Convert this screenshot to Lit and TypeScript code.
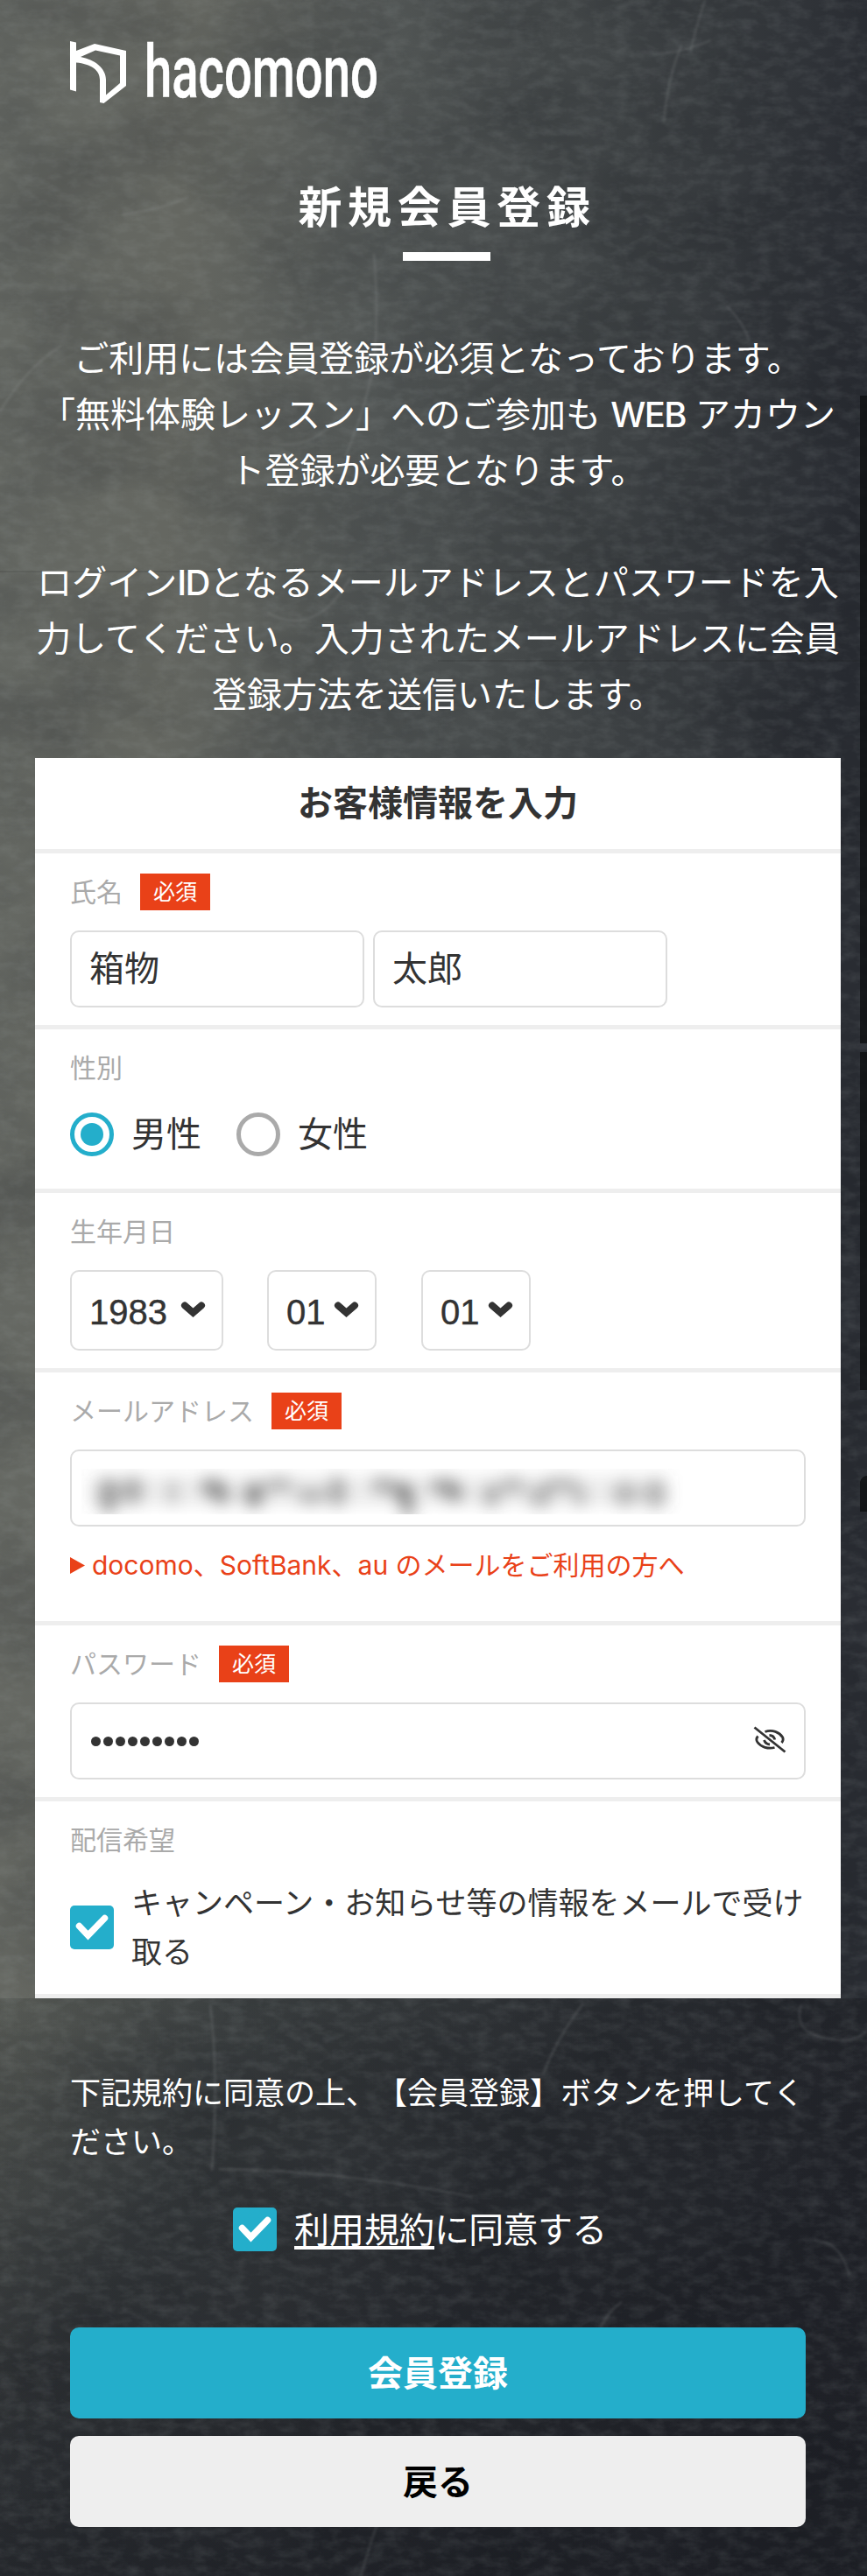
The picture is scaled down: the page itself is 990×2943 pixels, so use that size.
import { LitElement, html, svg, css, nothing } from "lit";
import { customElement, property } from "lit/decorators.js";

const check = svg`<path d="M10.5 23.5 L20.5 34 L39.5 14.5" fill="none" stroke="#fff" stroke-width="7.5" stroke-linecap="round" stroke-linejoin="miter"/>`;

@customElement("concrete-wall")
class ConcreteWall extends LitElement {
  static styles = css`
    :host { display: block; overflow: hidden; }
    svg { display: block; width: 990px; height: 2943px; }
  `;
  render() {
    return html`<svg viewBox="0 0 990 2943" aria-hidden="true">
      <defs>
        <linearGradient id="top" x1="0" y1="0" x2="1" y2="0.12">
          <stop offset="0" stop-color="#656863"/><stop offset="0.22" stop-color="#656761"/>
          <stop offset="0.45" stop-color="#525655"/><stop offset="0.72" stop-color="#3e4244"/>
          <stop offset="1" stop-color="#2a2d33"/>
        </linearGradient>
        <linearGradient id="low" x1="0" y1="0" x2="1" y2="0.3">
          <stop offset="0" stop-color="#575a55"/><stop offset="0.25" stop-color="#3a3e3f"/>
          <stop offset="0.6" stop-color="#2a2d31"/><stop offset="1" stop-color="#212329"/>
        </linearGradient>
        <linearGradient id="fade" x1="0" y1="0" x2="0" y2="1">
          <stop offset="0" stop-color="#1c1e24" stop-opacity="0"/><stop offset="1" stop-color="#1c1e24" stop-opacity="0.65"/>
        </linearGradient>
        <filter id="mottle" x="0" y="0" width="100%" height="100%" color-interpolation-filters="sRGB">
          <feTurbulence type="fractalNoise" baseFrequency="0.006 0.009" numOctaves="6" seed="7"/>
          <feColorMatrix values="0 0 0 0 0.07  0 0 0 0 0.08  0 0 0 0 0.1  2 0 0 0 -0.75"/>
        </filter>
        <filter id="grain" x="0" y="0" width="100%" height="100%" color-interpolation-filters="sRGB">
          <feTurbulence type="fractalNoise" baseFrequency="0.05 0.09" numOctaves="4" seed="23"/>
          <feColorMatrix values="0 0 0 0 0.68  0 0 0 0 0.71  0 0 0 0 0.71  1 0 0 0 -0.38"/>
        </filter>
        <filter id="soft"><feGaussianBlur stdDeviation="1.6"/></filter>
      </defs>
      <rect width="990" height="2283" fill="url(#top)"/>
      <rect y="2283" width="990" height="660" fill="url(#low)"/>
      <rect y="2283" width="990" height="660" fill="url(#fade)"/>
      <rect width="990" height="2943" filter="url(#mottle)" opacity="0.22"/>
      <rect width="990" height="2943" filter="url(#grain)" opacity="0.24"/>
      <g fill="none" stroke="#a9b0ae" stroke-opacity="0.2" stroke-width="2.2" filter="url(#soft)">
        <path d="M805 0 Q795 30 788 60"/><path d="M745 62 Q780 60 812 46"/>
        <path d="M778 52 Q762 90 758 140"/><path d="M140 245 Q190 238 215 225"/>
        <path d="M427 290 Q432 350 428 400 T395 520"/><path d="M310 506 Q350 515 382 482"/>
        <path d="M305 700 Q360 730 400 660"/><path d="M0 470 Q30 420 70 395"/>
        <path d="M830 350 Q850 370 856 390"/><path d="M240 2290 Q250 2370 242 2480"/>
        <path d="M665 2290 Q635 2330 620 2370"/><path d="M250 2478 Q390 2480 540 2510"/>
        <path d="M915 2290 Q905 2320 940 2328 T990 2320"/><path d="M710 2630 Q695 2640 685 2660"/>
        <path d="M430 2885 Q420 2915 412 2943"/><path d="M970 2600 Q960 2560 930 2560"/>
      </g>
      <g fill="#15161b" fill-opacity="0.12">
        <rect y="652" width="990" height="2"/><rect y="754" x="500" width="490" height="2"/>
      </g>
      <g fill="#0d0e10" fill-opacity="0.78">
        <rect x="982" y="452" width="8" height="740"/>
        <path d="M982 1202 H990 V1588 H982 Z"/>
        <path d="M990 1686 Q984 1686 982 1693 V1727 H990 Z"/>
      </g>
    </svg>`;
  }
}

@customElement("form-row")
class FormRow extends LitElement {
  @property() label = "";
  @property({ type: Boolean }) required = false;
  static styles = css`
    :host { display: block; box-sizing: border-box; padding: 22px 40px 20px; border-bottom: 5px solid #eee; }
    .head { display: flex; align-items: center; gap: 20px; height: 44px; }
    .label { font-size: 30px; line-height: 43px; color: #aaa; }
    .badge { width: 80px; height: 42px; background: #e94118; color: #fff; font-size: 25px; line-height: 42px; text-align: center; }
    .body { padding-top: 22px; }
  `;
  render() {
    return html`<div class="head"><span class="label">${this.label}</span>${this.required ? html`<span class="badge">必須</span>` : nothing}</div>
      <div class="body"><slot></slot></div>`;
  }
}

@customElement("app-root")
class AppRoot extends LitElement {
  static styles = css`
    :host { display: block; width: 990px; font-family: Inter, "Noto Sans CJK JP", sans-serif; color: #333; font-size: 40px; text-spacing-trim: space-all; }
    * { box-sizing: border-box; }
    .page { display: grid; width: 990px; height: 2943px; overflow: hidden; }
    .wall, .content { grid-area: 1 / 1; }
    .content { z-index: 1; padding: 0 30px 0 40px; width: 990px; }
    .logo { display: block; margin: 10px 0 0 35px; width: 370px; height: 150px; overflow: visible; }
    .wordmark { font-family: Roboto, sans-serif; font-weight: 500; font-size: 84px; fill: #fff; stroke: #fff; stroke-width: 0.6px; }
    h1 { margin: 40px 0 0; padding-left: 21px; height: 72px; line-height: 74px; font-size: 50px; font-weight: 700; letter-spacing: 6.7px; text-align: center; color: #fff; }
    .bar { width: 100px; height: 10px; margin: 16px auto 0; background: #fff; transform: translateX(10px); }
    .intro { margin: 80px 0 0; color: #fff; text-align: center; line-height: 64px; white-space: nowrap; }
    .intro p { margin: 0 0 64px; }
    .intro p:last-child { margin: 0; }
    .latin { letter-spacing: -1.6px; font-weight: 500; }
    .panel { margin-top: 40px; background: #fff; width: 920px; }
    h2 { margin: 0; height: 109px; line-height: 104px; font-size: 40px; font-weight: 700; text-align: center; border-bottom: 5px solid #eee; }
    .inputs { display: flex; gap: 10px; }
    .input { width: 336px; height: 88px; border: 2px solid #ddd; border-radius: 10px; padding: 0 20px; line-height: 84px; display: flex; align-items: center; }
    .wide { width: 840px; }
    .radios { display: flex; gap: 40px; padding: 7px 0 17px; }
    .radio { display: flex; gap: 20px; align-items: center; line-height: 50px; height: 50px; }
    .ring { width: 50px; height: 50px; border: 5px solid #aaa; border-radius: 50%; display: grid; place-items: center; }
    .ring.on { border-color: #24aecb; }
    .ring.on::after { content: ""; width: 26px; height: 26px; border-radius: 50%; background: #24aecb; }
    .selects { display: flex; gap: 50px; }
    .select { height: 92px; border: 2px solid #ddd; border-radius: 10px; padding: 5px 19px 0 20px; display: flex; align-items: center; justify-content: space-between; width: 125px; font-family: "Liberation Sans", sans-serif; -webkit-text-stroke: 0.4px #333; }
    .select.year { width: 175px; }
    .select.day { margin-left: 1px; }
    .chev { flex: none; width: 27px; height: 18px; margin-top: -7px; overflow: visible; }
    .masked { display: block; width: 687px; height: 52px; margin-left: -9px; margin-top: 8px; overflow: hidden; }
    .carrier { display: flex; align-items: center; gap: 8px; margin-top: 20px; height: 48px; font-size: 30px; line-height: 48px; color: #e94118; white-space: nowrap; }
    .tri { width: 17px; height: 19px; }
    .mail { padding-bottom: 20px; }
    .password { justify-content: space-between; padding-right: 20px; }
    .dots { display: flex; gap: 3px; padding: 1px 0 0 1.5px; }
    .dot { width: 11px; height: 11px; border-radius: 50%; background: #333; }
    .eye { width: 38px; height: 31px; margin-top: -4px; }
    .optin { display: flex; align-items: center; gap: 20px; font-size: 35px; line-height: 56px; white-space: nowrap; }
    .box { flex: none; display: block; width: 50px; height: 50px; border-radius: 5px; background: #24aecb; }
    .note { margin: 80px 0 0 40px; color: #fff; font-size: 35px; line-height: 56px; white-space: nowrap; }
    .agree { display: flex; align-items: center; gap: 20px; margin: 46px 0 0 226px; height: 52px; line-height: 52px; color: #fff; }
    .link { display: inline-block; height: 44px; line-height: 44px; border-bottom: 4px solid #fff; }
    .agreetext { display: flex; align-items: center; padding-top: 2px; }
    .rest { height: 44px; line-height: 44px; letter-spacing: -0.7px; }
    .buttons { display: flex; flex-direction: column; gap: 20px; margin: 86px 0 0 40px; width: 840px; }
    .btn { height: 104px; border: 0; border-radius: 10px; font: inherit; font-weight: 700; padding: 0 0 5px; color: #fff; background: #24aecb; }
    .btn.back { background: #eee; color: #000; }
  `;

  private select(value: string, kind: string) {
    return html`<div class="select ${kind}"><span>${value}</span>
      <svg class="chev" viewBox="0 0 27 18"><path d="M4 4.500 L13.5 12.800 L23 4.500" fill="none" stroke="#333" stroke-width="8" stroke-linecap="round"/></svg></div>`;
  }

  render() {
    const blobs = [
      [31, 31, 12, 21, .45], [58, 25, 13, 16, .38], [104, 27, 6, 15, .3], [149, 21, 14, 11, .45], [160, 30, 11, 12, .4],
      [197, 30, 12, 15, .52], [225, 18, 18, 9, .33], [262, 31, 17, 11, .3], [292, 26, 11, 18, .38], [345, 19, 15, 10, .37],
      [368, 27, 12, 12, .55], [373, 44, 9, 12, .45], [414, 20, 18, 10, .4], [426, 29, 12, 10, .4], [468, 31, 11, 14, .34],
      [492, 19, 16, 10, .3], [524, 32, 14, 14, .31], [548, 18, 22, 9, .3], [569, 32, 10, 12, .26], [621, 29, 15, 15, .3], [655, 29, 14, 17, .32],
    ];
    return html`<div class="page">
      <concrete-wall class="wall"></concrete-wall>
      <main class="content">
        <svg class="logo" viewBox="0 -30 370 150" role="img" aria-label="hacomono">
          <path d="M5 7 L12 8.5 V18 L33 10 L69 18 V58 L43.5 78 L39 77 V51 C39 40 29 33 12 31.5 V64.500 L5 62.500 Z M17 25 C33 28 46 38 46 51 V68.500 L62 55 V23.500 L34 17.500 Z" fill="#fff" fill-rule="evenodd"/>
          <text class="wordmark" x="90" y="71" textLength="267" lengthAdjust="spacingAndGlyphs">hacomono</text>
        </svg>
        <h1>新規会員登録</h1>
        <div class="bar"></div>
        <div class="intro">
          <p>ご利用には会員登録が必須となっております。<br>「無料体験レッスン」へのご参加も <span class="latin">WEB</span> アカウン<br>ト登録が必要となります。</p>
          <p>ログイン<span class="latin">ID</span>となるメールアドレスとパスワードを入<br>力してください。入力されたメールアドレスに会員<br>登録方法を送信いたします。</p>
        </div>
        <section class="panel">
          <h2>お客様情報を入力</h2>
          <form-row label="氏名" required>
            <div class="inputs"><div class="input">箱物</div><div class="input">太郎</div></div>
          </form-row>
          <form-row label="性別">
            <div class="radios">
              <div class="radio"><span class="ring on"></span>男性</div>
              <div class="radio"><span class="ring"></span>女性</div>
            </div>
          </form-row>
          <form-row label="生年月日">
            <div class="selects">${this.select("1983", "year")}${this.select("01", "")}${this.select("01", "day")}</div>
          </form-row>
          <form-row label="メールアドレス" required>
            <div class="mail">
              <div class="input wide">
                <svg class="masked" viewBox="0 0 687 52">
                  <defs><filter id="b" x="-5%" y="-60%" width="110%" height="220%"><feGaussianBlur stdDeviation="8.5"/></filter></defs>
                  <g filter="url(#b)">
                    <rect x="8" y="8" width="662" height="34" fill="#777" opacity="0.12"/>
                    ${blobs.map(([x, y, rx, ry, o]) => svg`<ellipse cx=${x} cy=${y} rx=${rx} ry=${ry} fill="#444" opacity=${o}/>`)}
                  </g>
                </svg>
              </div>
              <div class="carrier"><svg class="tri" viewBox="0 0 17 18" preserveAspectRatio="none"><path d="M0 0 L17 9 L0 18Z" fill="#e94118"/></svg><span>docomo、SoftBank、au のメールをご利用の方へ</span></div>
            </div>
          </form-row>
          <form-row label="パスワード" required>
            <div class="input wide password">
              <span class="dots">${Array.from({ length: 9 }, () => html`<i class="dot"></i>`)}</span>
              <svg class="eye" viewBox="0 0 38 31" fill="none" stroke="#333" stroke-width="2.8" stroke-linecap="butt">
                <path d="M1.500 1.500 L36.500 29.500"/>
                <path d="M13.500 6.500 C22 3.500 30 7 33.800 13 Q35 16 32.500 19"/>
                <path d="M5.500 11.500 Q2.500 15 5 18.500 C9 24 17 26.500 24.500 24.500"/>
                <path d="M18.500 10.500 Q23.500 10.500 24.800 15.500 M12.500 16 Q14 20.500 19 21"/>
              </svg>
            </div>
          </form-row>
          <form-row label="配信希望">
            <div class="optin"><svg class="box" viewBox="0 0 50 50">${check}</svg><span>キャンペーン・お知らせ等の情報をメールで受け<br>取る</span></div>
          </form-row>
        </section>
        <p class="note">下記規約に同意の上、【会員登録】ボタンを押してく<br>ださい。</p>
        <div class="agree"><svg class="box" viewBox="0 0 50 50">${check}</svg><span class="agreetext"><span class="link">利用規約</span><span class="rest">に同意する</span></span></div>
        <div class="buttons"><button class="btn">会員登録</button><button class="btn back">戻る</button></div>
      </main>
    </div>`;
  }
}
